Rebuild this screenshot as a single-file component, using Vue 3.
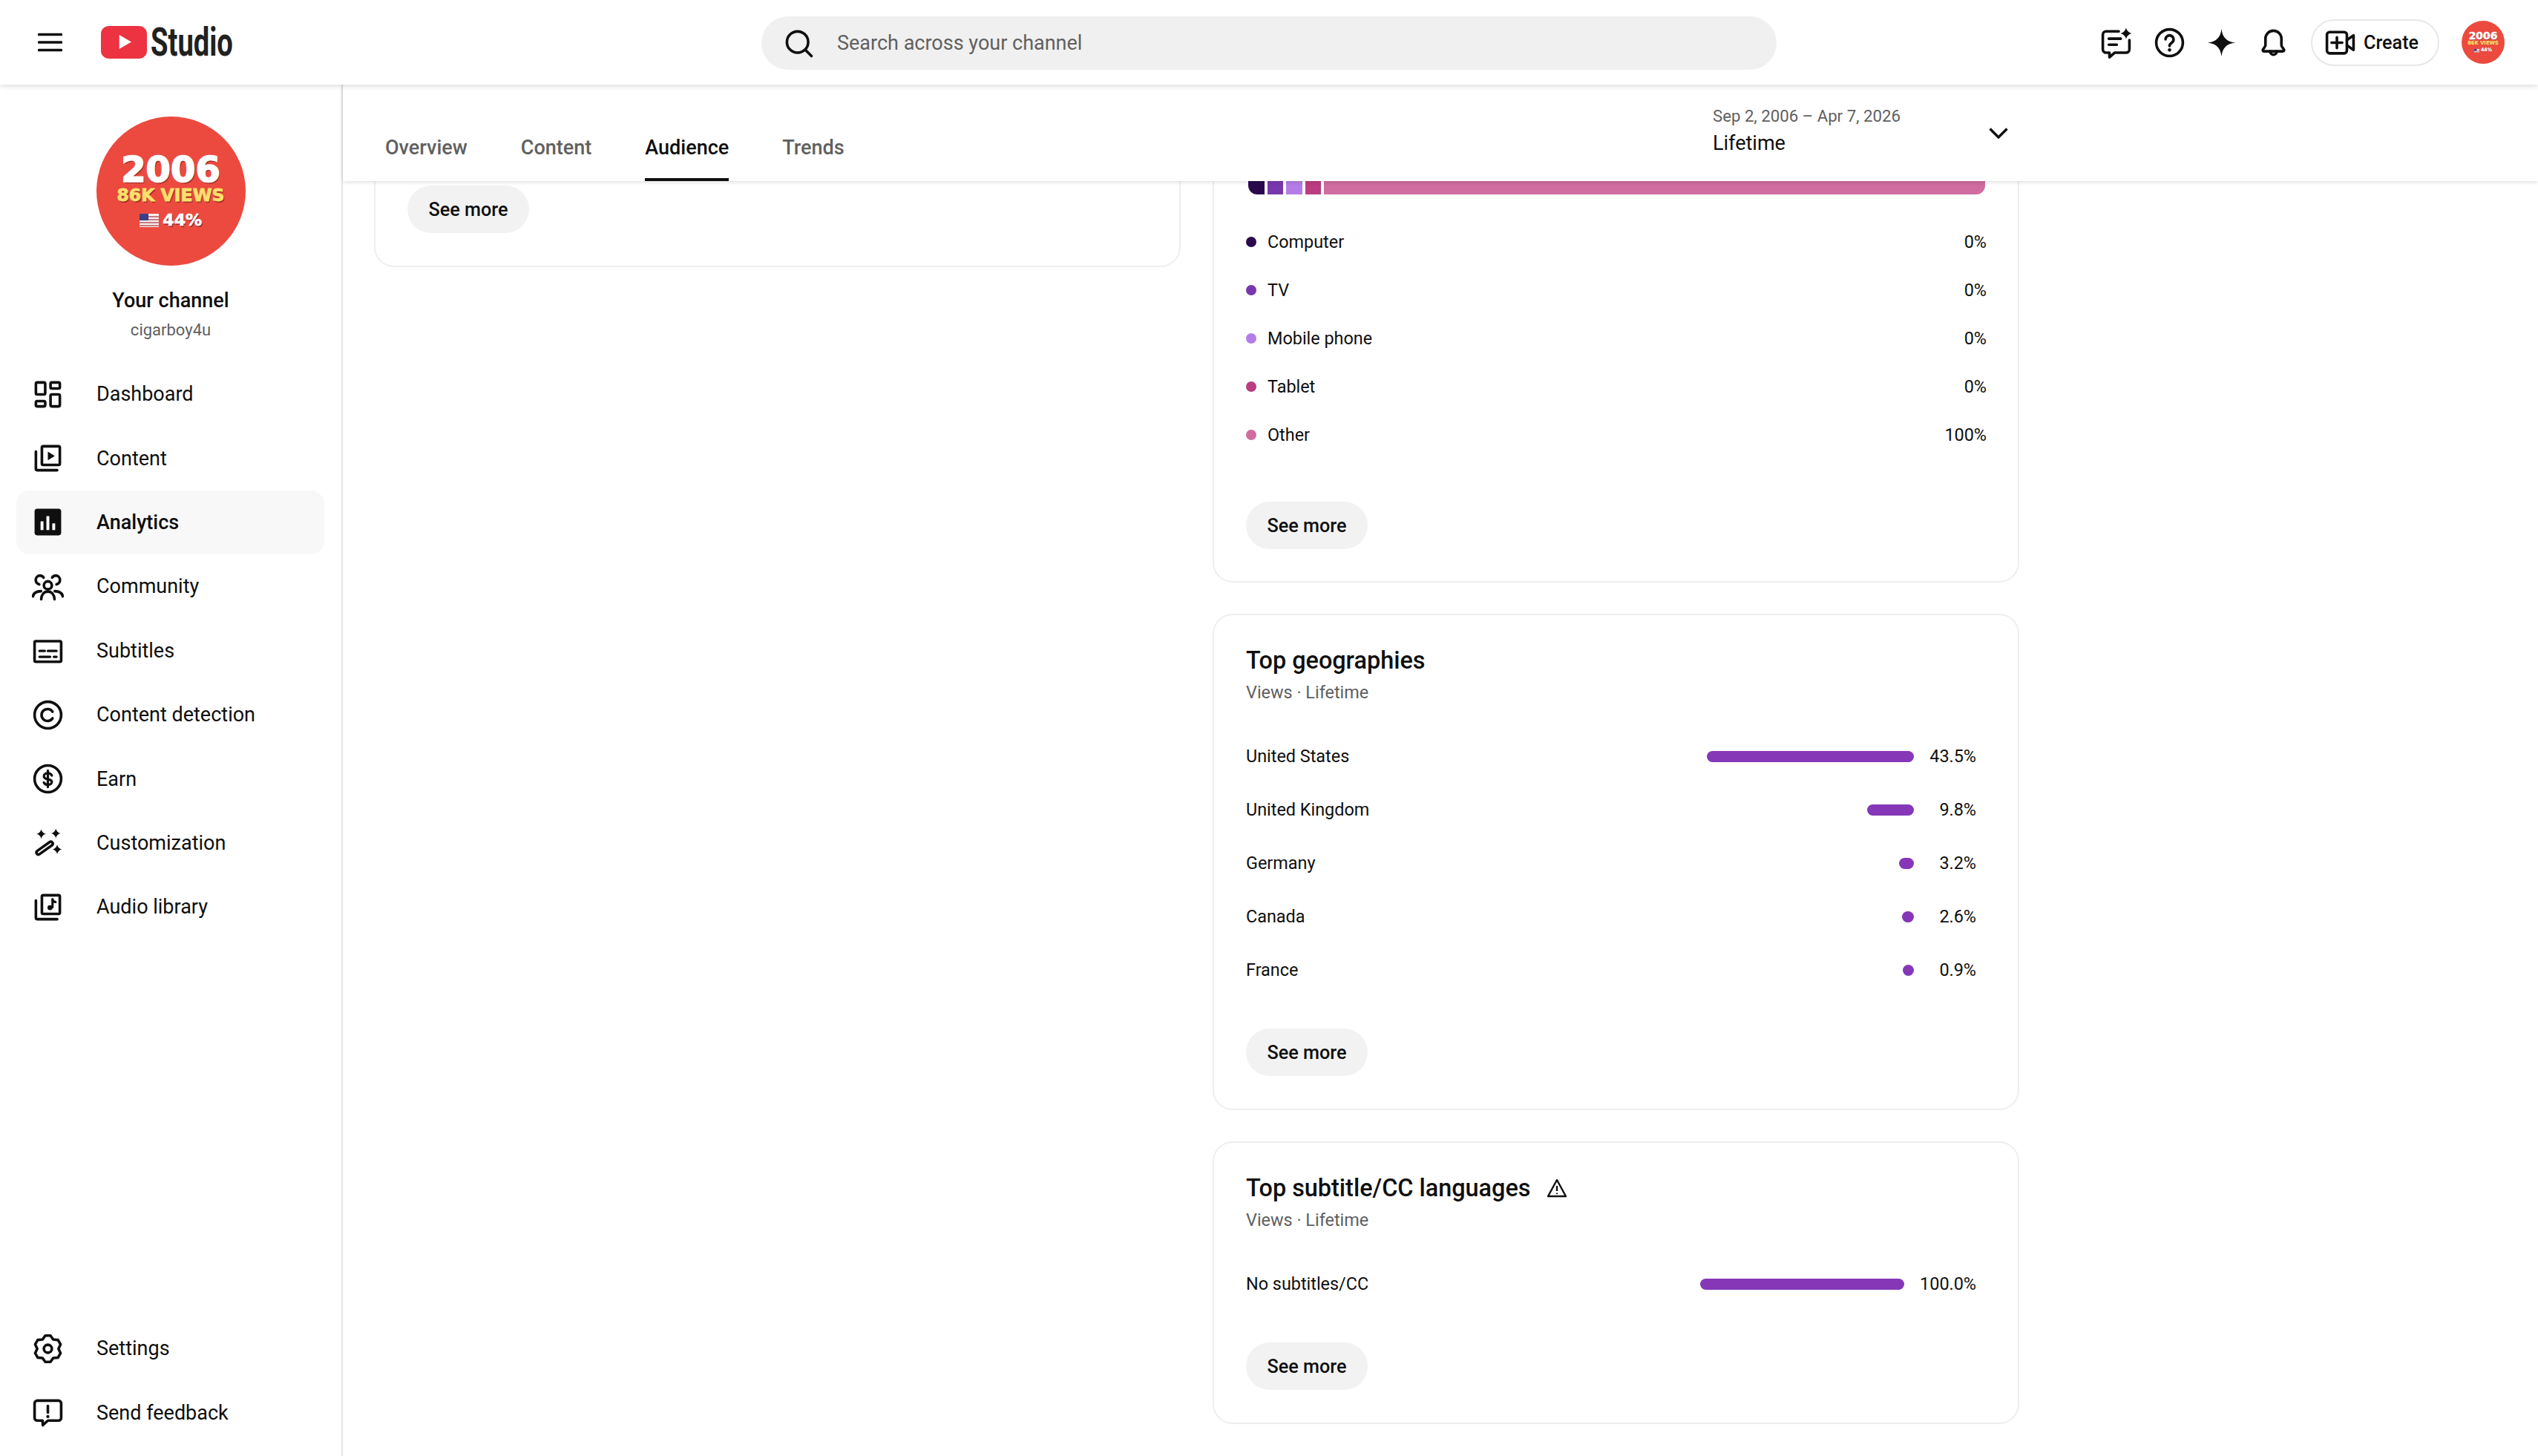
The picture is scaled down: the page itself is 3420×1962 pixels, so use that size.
<template>
  <div class="page">
    <header class="topbar">
      <div class="brand">
        <svg class="burger" viewBox="0 0 33 26"><path d="M1.5 2.5h30M1.5 13h30M1.5 23.5h30" /></svg>
        <svg class="yt" viewBox="0 0 62 44">
          <path d="M11 0h40c6 0 11 4.500 11 10.500v23C62 39.500 57 44 51 44H11C5 44 0 39.500 0 33.500v-23C0 4.500 5 0 11 0z" fill="#ed3241" />
          <path d="M24.700 12 41 21.500 24.700 31z" fill="#fff" />
        </svg>
        <span class="studio">Studio</span>
      </div>
      <div class="search">
        <svg class="ico" viewBox="0 0 24 24"><circle cx="11" cy="11" r="8" /><path d="M17 17l4.500 4.500" /></svg>
        <span>Search across your channel</span>
      </div>
      <div class="actions">
        <svg class="ico first" viewBox="0 0 24 24" v-html="icons.ideas"></svg>
        <svg class="ico" viewBox="0 0 24 24" v-html="icons.help"></svg>
        <svg class="ico" viewBox="0 0 24 24" v-html="icons.spark"></svg>
        <svg class="ico" viewBox="0 0 24 24" v-html="icons.bell"></svg>
        <div class="create">
          <svg class="ico" viewBox="0 0 24 24" v-html="icons.camera"></svg>
          <span>Create</span>
        </div>
        <div class="avatar small">
          <span class="av-year">2006</span>
          <span class="av-views">86K VIEWS</span>
          <span class="av-pct">
            <svg class="flag" viewBox="0 0 26 18"><path fill="#f6f1f1" d="M0 0h26v18H0z" /><path fill="#c9797f" d="M0 3h26v2H0zM0 7h26v2H0zM0 11h26v2H0zM0 15h26v2H0z" /><path fill="#3b3f86" d="M0 0h12v9H0z" /></svg>
            44%
          </span>
        </div>
      </div>
    </header>

    <div class="body">
      <aside class="sidebar">
        <div>
          <div class="profile">
            <div class="avatar big">
              <span class="av-year">2006</span>
              <span class="av-views">86K VIEWS</span>
              <span class="av-pct">
                <svg class="flag" viewBox="0 0 26 18"><path fill="#f6f1f1" d="M0 0h26v18H0z" /><path fill="#c9797f" d="M0 3h26v2H0zM0 7h26v2H0zM0 11h26v2H0zM0 15h26v2H0z" /><path fill="#3b3f86" d="M0 0h12v9H0z" /></svg>
                44%
              </span>
            </div>
            <div class="chan-name">Your channel</div>
            <div class="chan-handle">cigarboy4u</div>
          </div>
          <nav class="nav">
            <a v-for="item in navTop" :key="item.label" class="nav-item" :class="{ active: item.active }">
              <svg class="ico" viewBox="0 0 24 24" v-html="item.icon"></svg>
              <span>{{ item.label }}</span>
            </a>
          </nav>
        </div>
        <nav class="nav nav-bottom">
          <a v-for="item in navBottom" :key="item.label" class="nav-item">
            <svg class="ico" viewBox="0 0 24 24" v-html="item.icon"></svg>
            <span>{{ item.label }}</span>
          </a>
        </nav>
      </aside>

      <main class="main">
        <div class="tabbar">
          <div class="tabs">
            <div v-for="tab in tabs" :key="tab" class="tab" :class="{ on: tab === 'Audience' }">{{ tab }}</div>
          </div>
          <div class="range">
            <div>
              <div class="range-dates">Sep 2, 2006 – Apr 7, 2026</div>
              <div class="range-label">Lifetime</div>
            </div>
            <svg class="chev" viewBox="0 0 26 15"><path d="M1.500 1.500 13 13 24.500 1.500" /></svg>
          </div>
        </div>

        <div class="scroll">
          <div class="col">
            <section class="card card-cut">
              <button class="more">See more</button>
            </section>
          </div>

          <div class="col">
            <section class="card card-device">
              <div class="stack">
                <span v-for="d in devices" :key="d.label" :class="{ wide: d.wide }" :style="{ background: d.color }"></span>
              </div>
              <ul class="legend">
                <li v-for="d in devices" :key="d.label">
                  <i :style="{ background: d.color }"></i>
                  <span class="grow">{{ d.label }}</span>
                  <span>{{ d.value }}</span>
                </li>
              </ul>
              <button class="more">See more</button>
            </section>

            <section v-for="list in lists" :key="list.title" class="card">
              <h2>
                {{ list.title }}
                <svg v-if="list.warn" class="warn" viewBox="0 0 28 26">
                  <path d="M14 2 26 24H2z" />
                  <path d="M14 10v7M14 19.500v1.500" />
                </svg>
              </h2>
              <div class="sub">Views · Lifetime</div>
              <div class="bars">
                <div v-for="row in list.rows" :key="row.label" class="bar-row">
                  <span>{{ row.label }}</span>
                  <div class="track" :style="{ width: list.track + 'px' }">
                    <div class="fill" :style="{ width: (row.value / list.rows[0].value) * list.track + 'px' }"></div>
                  </div>
                  <span class="val">{{ row.value.toFixed(1) }}%</span>
                </div>
              </div>
              <button class="more">See more</button>
            </section>
          </div>
        </div>
      </main>
    </div>
  </div>
</template>

<script setup>
function gearPath() {
  let pts = []
  for (let k = 0; k < 6; k++) {
    let a = -90 + 60 * k
    for (let [r, off] of [[10.1, -11], [10.1, 11], [8, 30]]) {
      let rad = ((a + off) * Math.PI) / 180
      pts.push((12 + r * Math.cos(rad)).toFixed(2) + ' ' + (12 + r * Math.sin(rad)).toFixed(2))
    }
  }
  return 'M' + pts.join('L') + 'z'
}

const star = (x, y, r) =>
  `<path fill="#0f0f0f" stroke="none" d="M${x} ${y - r}Q${x + r * 0.2} ${y - r * 0.2} ${x + r} ${y}Q${x + r * 0.2} ${y + r * 0.2} ${x} ${y + r}Q${x - r * 0.2} ${y + r * 0.2} ${x - r} ${y}Q${x - r * 0.2} ${y - r * 0.2} ${x} ${y - r}z"/>`

const icons = {
  dashboard:
    '<rect x="3" y="3" width="7" height="9" rx="1"/><rect x="3" y="17" width="7" height="4" rx="1"/><rect x="14" y="3" width="7" height="4.500" rx="1"/><rect x="14" y="12" width="7" height="9" rx="1"/>',
  content:
    '<rect x="7.500" y="3" width="13.500" height="14" rx="1"/><path d="M3 7v13a1 1 0 0 0 1 1h15"/><path fill="#0f0f0f" stroke="none" d="M12 7v6.500l5.200-3.200z"/>',
  analytics:
    '<rect x="2" y="2" width="20" height="20" rx="2" fill="#0f0f0f" stroke="none"/><path fill="#fff" stroke="none" d="M6.500 11.500h2.200V18H6.500zM10.900 7.500h2.200V18h-2.200zM15.300 13h2.200v5h-2.200z"/>',
  community:
    '<circle cx="12" cy="11" r="3"/><path d="M7 21.500c.2-3.500 2.200-5.800 5-5.800s4.800 2.300 5 5.800"/><path d="M8.800 5.200C8.200 4.200 7.200 3.700 6.100 3.700 4.200 3.700 2.900 5.200 2.900 7c0 1.600 1 2.900 2.600 3.300M15.200 5.200c.6-1 1.600-1.500 2.700-1.500 1.900 0 3.200 1.500 3.200 3.300 0 1.600-1 2.900-2.600 3.300"/><path d="M.8 19.300c.4-2.300 2.700-3.800 6-3.900M23.200 19.300c-.4-2.300-2.700-3.800-6-3.900"/>',
  subtitles:
    '<rect x="2" y="5" width="20" height="15.500" rx="1"/><path stroke-width="1.800" d="M5.700 12.400h4M12 12.400h6.500M5.700 16.800h8M16.500 16.800h2"/>',
  copyright:
    '<circle cx="12" cy="12" r="10"/><path d="M15.500 9.500a4.500 4.500 0 1 0 0 5"/>',
  earn:
    '<circle cx="12" cy="12" r="10"/><path stroke-width="1.800" d="M15 9.500c-.5-1-1.600-1.700-3-1.700-1.700 0-3 .9-3 2.200 0 3.200 6 1.600 6 4.300 0 1.300-1.300 2.200-3 2.200-1.400 0-2.500-.7-3-1.700M12 5.800v12.400"/>',
  wand:
    '<path d="m4 18.200 9.300-6.600c.7-.5 1.600-.3 2.100.3.500.7.300 1.600-.3 2.100l-9.300 6.600c-.7.5-1.600.3-2.100-.3-.5-.7-.3-1.600.3-2.100z"/>' +
    star(7, 5.500, 3.500) + star(18, 5, 3.500) + star(19, 17, 3.500),
  audio:
    '<rect x="7.500" y="3" width="13.500" height="14" rx="1"/><path d="M3 7v13a1 1 0 0 0 1 1h15"/><path stroke-width="1.700" d="M15.500 6v6"/><circle cx="13.600" cy="12.300" r="1.900" fill="#0f0f0f" stroke="none"/><path stroke-width="1.700" d="M15.500 6.200c.3 1.300 1.200 1.800 2.300 1.900"/>',
  settings: `<path d="${gearPath()}"/><circle cx="12" cy="12" r="3"/>`,
  feedback:
    '<path d="M4 3h16a2 2 0 0 1 2 2v11a2 2 0 0 1-2 2h-8l-3.800 3.500L8 18H4a2 2 0 0 1-2-2V5a2 2 0 0 1 2-2z"/><path d="M12 7v5"/><circle cx="12" cy="15" r="1.200" fill="#0f0f0f" stroke="none"/>',
  ideas:
    '<path d="M14 3.500H4.500A2.500 2.500 0 0 0 2 6v11a2.500 2.500 0 0 0 2.500 2.500H7V23l4-3.500h8.500A2.500 2.500 0 0 0 22 17V10"/><path d="M6.500 9h9M6.500 13.500h6"/>' +
    star(19.500, 5, 4.200),
  help:
    '<circle cx="12" cy="12" r="10"/><path d="M9 9.500a3 3 0 1 1 4.700 2.500c-1 .7-1.700 1.200-1.700 2.500"/><circle cx="12" cy="17.500" r="1.300" fill="#0f0f0f" stroke="none"/>',
  spark:
    '<path fill="#0f0f0f" stroke="none" d="M12 1.500C12.600 8 16 11.400 22.500 12 16 12.600 12.600 16 12 22.500 11.400 16 8 12.600 1.500 12 8 11.400 11.400 8 12 1.500z"/>',
  bell:
    '<path d="M12 3a6 6 0 0 0-6 6v5c0 1.200-2 2.700-2 3.500 0 .6.400 1 1 1h14c.6 0 1-.4 1-1 0-.8-2-2.300-2-3.500V9a6 6 0 0 0-6-6z"/><path d="M9.500 18.500a2.500 2.500 0 1 0 5 0"/>',
  camera:
    '<rect x="2" y="4" width="15" height="16" rx="2"/><path d="M9.500 8v8M5.500 12h8"/><path d="M17 10l5-3.500v11L17 14"/>',
}

const navTop = [
  { label: 'Dashboard', icon: icons.dashboard },
  { label: 'Content', icon: icons.content },
  { label: 'Analytics', icon: icons.analytics, active: true },
  { label: 'Community', icon: icons.community },
  { label: 'Subtitles', icon: icons.subtitles },
  { label: 'Content detection', icon: icons.copyright },
  { label: 'Earn', icon: icons.earn },
  { label: 'Customization', icon: icons.wand },
  { label: 'Audio library', icon: icons.audio },
]

const navBottom = [
  { label: 'Settings', icon: icons.settings },
  { label: 'Send feedback', icon: icons.feedback },
]

const tabs = ['Overview', 'Content', 'Audience', 'Trends']

const devices = [
  { label: 'Computer', value: '0%', color: '#2a0a4d' },
  { label: 'TV', value: '0%', color: '#7838ab' },
  { label: 'Mobile phone', value: '0%', color: '#b57ce8' },
  { label: 'Tablet', value: '0%', color: '#b93d80' },
  { label: 'Other', value: '100%', color: '#d06ca0', wide: true },
]

const lists = [
  {
    title: 'Top geographies',
    track: 279,
    rows: [
      { label: 'United States', value: 43.5 },
      { label: 'United Kingdom', value: 9.8 },
      { label: 'Germany', value: 3.2 },
      { label: 'Canada', value: 2.6 },
      { label: 'France', value: 0.9 },
    ],
  },
  {
    title: 'Top subtitle/CC languages',
    warn: true,
    track: 275,
    rows: [{ label: 'No subtitles/CC', value: 100 }],
  },
]
</script>

<style scoped>
.page {
  width: 3420px;
  height: 1962px;
  display: flex;
  flex-direction: column;
  overflow: hidden;
  background: #fff;
  color: #0f0f0f;
  font-family: Roboto, "Liberation Sans", sans-serif;
}
.ico {
  width: 43px;
  height: 43px;
  flex: none;
  fill: none;
  stroke: #0f0f0f;
  stroke-width: 2;
  stroke-linejoin: round;
  stroke-linecap: round;
}

.topbar {
  height: 114px;
  flex: none;
  display: flex;
  align-items: center;
  position: relative;
  z-index: 3;
  background: #fff;
  box-shadow: 0 2px 7px rgba(0, 0, 0, 0.14);
}
.brand {
  width: 1026px;
  flex: none;
  display: flex;
  align-items: center;
  padding-left: 51px;
  box-sizing: border-box;
}
.burger {
  width: 33px;
  height: 26px;
  margin-right: 52px;
  fill: none;
  stroke: #0f0f0f;
  stroke-width: 3.600;
  stroke-linecap: round;
}
.yt {
  width: 62px;
  height: 44px;
  margin-right: 5px;
}
.studio {
  display: inline-block;
  font-family: "Liberation Sans Narrow", Roboto, sans-serif;
  font-weight: 700;
  font-size: 53px;
  line-height: 60px;
  color: #212121;
  transform: scaleX(0.72);
  transform-origin: left center;
}
.search {
  width: 1368px;
  height: 72px;
  flex: none;
  margin-top: 2px;
  display: flex;
  align-items: center;
  gap: 30px;
  padding-left: 29px;
  box-sizing: border-box;
  background: #f0f0f0;
  border-radius: 36px;
  font-size: 27px;
  color: #606060;
}
.actions {
  flex: 1;
  display: flex;
  align-items: center;
  justify-content: flex-end;
  gap: 27px;
  padding-right: 45px;
}
.actions .first {
  margin-right: 2px;
}
.create {
  width: 173px;
  height: 63px;
  margin-left: 2px;
  box-sizing: border-box;
  display: flex;
  align-items: center;
  gap: 10px;
  padding-left: 16px;
  border: 2px solid #e8e8e8;
  border-radius: 32px;
  font-size: 25.200px;
  font-weight: 500;
}

.avatar {
  flex: none;
  box-sizing: border-box;
  padding-top: 0.210em;
  display: flex;
  flex-direction: column;
  align-items: center;
  justify-content: center;
  border-radius: 50%;
  background: #ec4a3f;
  font-family: "DejaVu Sans", sans-serif;
  font-weight: 700;
  color: #fff;
  white-space: nowrap;
}
.avatar.big {
  width: 201px;
  height: 201px;
  font-size: 48px;
  margin-top: 43px;
}
.avatar.small {
  width: 58px;
  height: 58px;
  font-size: 13.850px;
  margin-left: 3px;
}
.av-year {
  font-size: 1em;
  line-height: 0.71;
  -webkit-text-stroke: 0.035em #fff;
  text-shadow: 0.03em 0.05em 0 #9c2f28;
}
.av-views {
  font-size: 0.49em;
  line-height: 1.450;
  color: #fbe06c;
  -webkit-text-stroke: 0.035em #fbe06c;
  text-shadow: 0.05em 0.07em 0 #9c2f28;
}
.av-pct {
  display: flex;
  align-items: center;
  gap: 0.25em;
  font-size: 0.46em;
  line-height: 1.540;
  -webkit-text-stroke: 0.03em #fff;
  text-shadow: 0.05em 0.07em 0 #9c2f28;
}
.flag {
  width: 1.180em;
  height: 0.820em;
}

.body {
  flex: 1;
  min-height: 0;
  display: flex;
}
.sidebar {
  width: 462px;
  flex: none;
  box-sizing: border-box;
  border-right: 2px solid #e5e5e5;
  display: flex;
  flex-direction: column;
  justify-content: space-between;
}
.profile {
  display: flex;
  flex-direction: column;
  align-items: center;
}
.chan-name {
  margin-top: 29px;
  font-size: 27px;
  line-height: 36px;
  font-weight: 500;
}
.chan-handle {
  margin-top: 7px;
  font-size: 22px;
  line-height: 30px;
  color: #606060;
}
.nav {
  margin: 28px 23px 0 22px;
}
.nav-bottom {
  margin-top: 0;
  margin-bottom: 15px;
}
.nav-item {
  height: 86.400px;
  display: flex;
  align-items: center;
  gap: 44px;
  padding-left: 21px;
  border-radius: 18px;
  font-size: 27px;
}
.nav-item.active {
  background: #f8f8f8;
  font-weight: 500;
}

.main {
  flex: 1;
  min-width: 0;
  display: flex;
  flex-direction: column;
}
.tabbar {
  height: 130px;
  flex: none;
  display: flex;
  justify-content: space-between;
  position: relative;
  z-index: 2;
  background: #fff;
  box-shadow: 0 1px 6px rgba(0, 0, 0, 0.15);
}
.tabs {
  display: flex;
  align-items: flex-end;
  gap: 72px;
  padding-left: 57px;
}
.tab {
  padding-bottom: 26px;
  line-height: 30px;
  font-size: 27px;
  font-weight: 500;
  color: #606060;
  border-bottom: 4px solid transparent;
}
.tab.on {
  color: #0f0f0f;
  border-bottom-color: #0f0f0f;
}
.range {
  width: 1112px;
  box-sizing: border-box;
  padding-top: 28px;
  display: flex;
}
.range > div {
  width: 372px;
}
.range-dates {
  font-size: 22.200px;
  line-height: 28px;
  color: #606060;
}
.range-label {
  margin-top: 5px;
  font-size: 27px;
  line-height: 36px;
}
.chev {
  width: 26px;
  height: 15px;
  margin-top: 30px;
  fill: none;
  stroke: #0f0f0f;
  stroke-width: 3.400;
}

.scroll {
  flex: 1;
  min-height: 0;
  overflow: hidden;
  display: grid;
  grid-template-columns: 1087px 1087px;
  column-gap: 43px;
  align-items: start;
  padding-left: 42px;
}
.col {
  display: flex;
  flex-direction: column;
  gap: 42px;
}
.card {
  box-sizing: border-box;
  padding: 41px 42px 44px 43px;
  border: 2px solid #eeeeee;
  border-radius: 27px;
  font-size: 23.400px;
}
.card-cut {
  margin-top: -100px;
  padding-top: 104px;
}
.card-device {
  margin-top: -100px;
  padding-top: 76px;
  padding-bottom: 43px;
}
.stack {
  height: 40px;
  margin: 0 2px 0 3px;
  display: flex;
  gap: 4px;
  border-radius: 12px;
  overflow: hidden;
}
.stack span {
  width: 21.500px;
}
.stack span.wide {
  flex: 1;
}
.legend {
  list-style: none;
  margin: 31px 0 0;
  padding: 0;
}
.legend li {
  height: 65px;
  display: flex;
  align-items: center;
}
.legend i {
  width: 14px;
  height: 14px;
  border-radius: 50%;
  margin-right: 15px;
}
.grow {
  flex: 1;
}
h2 {
  display: flex;
  align-items: center;
  gap: 22px;
  margin: 0;
  font-size: 32.400px;
  line-height: 40px;
  font-weight: 500;
}
.warn {
  width: 28px;
  height: 26px;
  fill: none;
  stroke: #0f0f0f;
  stroke-width: 2.400;
  stroke-linejoin: round;
}
.sub {
  margin-top: 8px;
  font-size: 23.400px;
  line-height: 30px;
  color: #606060;
}
.bars {
  margin-top: 35px;
  display: grid;
  grid-template-columns: 1fr auto auto;
  column-gap: 21px;
  padding-right: 14px;
  align-items: center;
}
.bar-row {
  display: contents;
}
.bar-row > span,
.track {
  height: 72px;
  display: flex;
  align-items: center;
}
.track {
  justify-content: flex-end;
}
.fill {
  height: 15px;
  min-width: 15px;
  border-radius: 8px;
  background: #8537b7;
}
.val {
  justify-content: flex-end;
}
.more {
  display: block;
  width: 164px;
  height: 64px;
  margin-top: 43px;
  padding: 0;
  border: none;
  border-radius: 32px;
  background: #f2f2f2;
  color: #0f0f0f;
  font-family: inherit;
  font-size: 25.200px;
  font-weight: 500;
}
.card-cut .more {
  margin-top: 0;
}
.card-device .more {
  margin-top: 58px;
}
</style>

<style>
html,
body {
  margin: 0;
  background: #fff;
  overflow: hidden;
}
</style>
